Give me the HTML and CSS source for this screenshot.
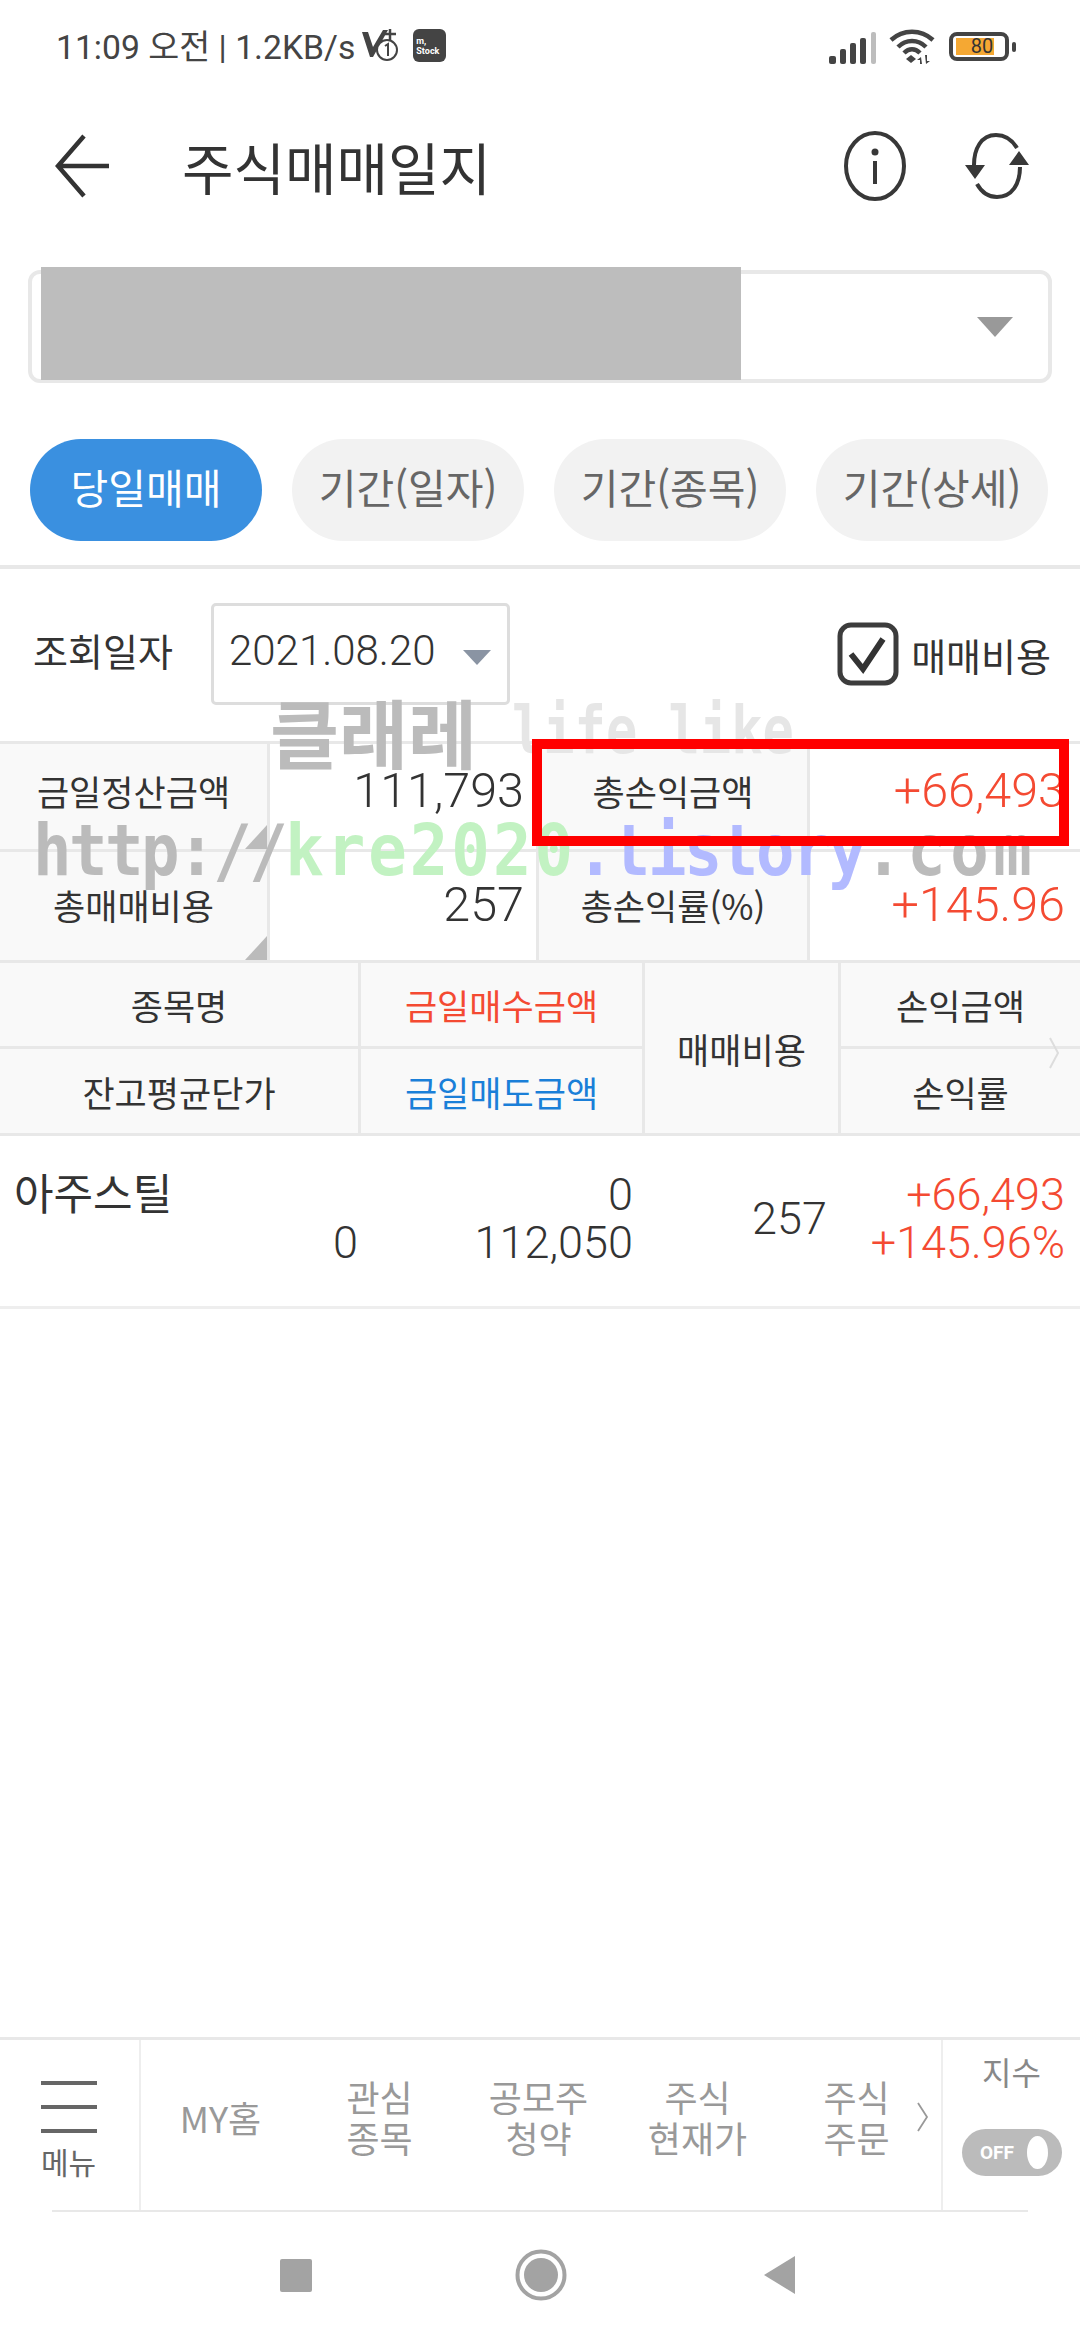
FILE: index.html
```html
<!doctype html>
<html lang="ko">
  <head>
    <meta charset="UTF-8" />
    <title>주식매매일지</title>
    <link rel="stylesheet" href="styles.css">
  </head>
  <body>
    <div class="page">
      <div class="status-bar">
        <span class="status-text">11:09 오전 | 1.2KB/s</span>
        <svg class="volte" width="38" height="34" viewBox="0 0 38 34">
          <path d="M1 4h6l5 15L22 2h5L12 29h-3z" fill="#444" />
          <path d="M29 1v11M24 6h11" stroke="#444" stroke-width="2.5" fill="none" />
          <circle cx="26" cy="22" r="10" fill="#fff" stroke="#444" stroke-width="2" />
          <path d="M24 18l3-2v12" stroke="#444" stroke-width="2" fill="none" />
        </svg>
        <div class="app-badge"><span>m,</span><span>Stock</span></div>
        <div class="status-right">
          <svg width="48" height="32" viewBox="0 0 48 32">
            <rect x="0" y="24" width="7" height="8" rx="2" fill="#444" />
            <rect x="11" y="17" width="6" height="15" rx="2" fill="#444" />
            <rect x="21" y="11" width="6" height="21" rx="2" fill="#444" />
            <rect x="31" y="6" width="6" height="26" rx="2" fill="#444" />
            <rect x="42" y="0" width="5" height="32" rx="2" fill="#bdbdbd" />
          </svg>
          <svg class="wifi" width="48" height="36" viewBox="0 0 48 36">
            <g fill="none" stroke="#444" stroke-width="4.5">
              <path d="M2 11C14 0 32 0 44 11" />
              <path d="M9 18C17 10 29 10 37 18" />
              <path d="M15 24C20 19 26 19 31 24" />
            </g>
            <path d="M17 30l5-4 5 4-5 4z" fill="#444" />
            <path d="M32 28l-4 3h3v4h2zM37 35l4-3h-3v-6h-2z" fill="#444" />
          </svg>
          <div class="battery">
            <div class="battery-body"><span class="battery-fill">80</span></div>
            <div class="battery-nub"></div>
          </div>
        </div>
      </div>

      <div class="title-bar">
        <svg class="back" width="56" height="66" viewBox="0 0 56 66">
          <path d="M29 3L3 33l26 30M3 33h51" fill="none" stroke="#333" stroke-width="4.5" />
        </svg>
        <h1>주식매매일지</h1>
        <svg class="info" width="62" height="72" viewBox="0 0 62 72">
          <ellipse cx="31" cy="36" rx="29" ry="33" fill="none" stroke="#383838" stroke-width="4" />
          <circle cx="31" cy="22" r="3.5" fill="#383838" />
          <path d="M31 31v23" stroke="#383838" stroke-width="4" />
        </svg>
        <svg class="refresh" width="64" height="68" viewBox="0 0 64 68">
          <path d="M52 16C46 6 38 3 31 3 16 3 9 17 9 33" fill="none" stroke="#383838" stroke-width="4" />
          <path d="M12 52c5 9 12 13 20 13 15 0 23-13 23-30" fill="none" stroke="#383838" stroke-width="4" />
          <path d="M0 33h20L10 47zM44 33h20L54 19z" fill="#383838" />
        </svg>
      </div>

      <div class="account-select">
        <div class="redacted"></div>
        <div class="arrow-big"></div>
      </div>

      <div class="tabs">
        <div class="tab tab-active">당일매매</div>
        <div class="tab">기간(일자)</div>
        <div class="tab">기간(종목)</div>
        <div class="tab">기간(상세)</div>
      </div>

      <div class="filter-row">
        <span class="filter-label">조회일자</span>
        <div class="date-select">
          <span>2021.08.20</span>
          <div class="arrow-small"></div>
        </div>
        <div class="cost-check">
          <svg width="62" height="64" viewBox="0 0 62 64">
            <rect x="3" y="3" width="56" height="58" rx="11" fill="#fff" stroke="#3c3c3c" stroke-width="5" />
            <path d="M14 32l12 15 20-30" fill="none" stroke="#333" stroke-width="6" />
          </svg>
          <span>매매비용</span>
        </div>
      </div>

      <div class="summary">
        <div class="cell label corner">금일정산금액</div>
        <div class="cell value">111,793</div>
        <div class="cell label">총손익금액</div>
        <div class="cell value value-last up">+66,493</div>
        <div class="cell label corner">총매매비용</div>
        <div class="cell value">257</div>
        <div class="cell label">총손익률(%)</div>
        <div class="cell value value-last up">+145.96</div>
      </div>

      <div class="table-head">
        <div class="th">종목명</div>
        <div class="th buy">금일매수금액</div>
        <div class="th th-tall">매매비용</div>
        <div class="th">손익금액</div>
        <div class="th">잔고평균단가</div>
        <div class="th sell">금일매도금액</div>
        <div class="th">손익률</div>
        <svg class="more" width="12" height="34" viewBox="0 0 12 34">
          <path d="M2 2l8 15-8 15" fill="none" stroke="#ddd" stroke-width="2" />
        </svg>
      </div>

      <div class="stock-row">
        <div class="stock-name">아주스틸</div>
        <div class="num">0</div>
        <div class="num num-tall">257</div>
        <div class="num up">+66,493</div>
        <div class="num">0</div>
        <div class="num">112,050</div>
        <div class="num up">+145.96%</div>
      </div>

      <div class="bottom-menu">
        <div class="menu-btn">
          <div class="menu-lines"><i></i><i></i><i></i></div>
          <span>메뉴</span>
        </div>
        <div class="menu-items">
          <div class="menu-item">MY홈</div>
          <div class="menu-item">관심<br />종목</div>
          <div class="menu-item">공모주<br />청약</div>
          <div class="menu-item">주식<br />현재가</div>
          <div class="menu-item">주식<br />주문</div>
          <svg width="12" height="30" viewBox="0 0 12 30">
            <path d="M1 1l9 14-9 14" fill="none" stroke="#999" stroke-width="1.8" />
          </svg>
        </div>
        <div class="index-box">
          <span>지수</span>
          <div class="toggle"><b>OFF</b><i></i></div>
        </div>
      </div>

      <div class="nav-bar">
        <div class="nav-square"></div>
        <svg class="nav-home" width="52" height="52" viewBox="0 0 52 52">
          <circle cx="26" cy="26" r="23.5" fill="none" stroke="#a3a3a3" stroke-width="4" />
          <circle cx="26" cy="26" r="17" fill="#a3a3a3" />
        </svg>
        <svg width="32" height="38" viewBox="0 0 32 38">
          <path d="M31 0v38L0 19z" fill="#a3a3a3" />
        </svg>
      </div>

      <!-- blog watermark and highlight sit on top of the screen -->
      <div class="watermark-top"><span class="wm-dark">클래레</span><span class="wm-light">life like</span></div>
      <div class="watermark-url"><span class="wm-http">http://</span><span class="wm-green">kre2020</span><span class="wm-blue">.tistory</span><span class="wm-com">.com</span></div>
      <div class="red-box"></div>
    </div>
  </body>
</html>
```

FILE: styles.css
```css
* {
  box-sizing: border-box;
}
body {
  margin: 0;
  background: #fff;
  font-family: Roboto, "Noto Sans CJK KR", sans-serif;
  color: #333;
}
.page {
  position: relative;
  width: 1080px;
  height: 2340px;
  overflow: hidden;
  display: flex;
  flex-direction: column;
}

/* status bar */
.status-bar {
  height: 94px;
  padding: 28px 64px 0 56px;
  display: flex;
  align-items: flex-start;
}
.status-text {
  font-size: 33.7px;
  line-height: 40px;
  color: #444;
  white-space: nowrap;
}
.volte {
  margin: 0 0 0 6px;
}
.app-badge {
  width: 33px;
  height: 33px;
  margin: 1px 0 0 14px;
  background: #444;
  border-radius: 6px;
  color: #fff;
  font-size: 9px;
  line-height: 10px;
  font-weight: 700;
  display: flex;
  flex-direction: column;
  justify-content: center;
  padding-left: 3px;
}
.status-right {
  margin-left: auto;
  display: flex;
  align-items: flex-start;
  gap: 12px;
  padding-top: 4px;
}
.wifi {
  margin-top: -3px;
}
.battery {
  display: flex;
  align-items: center;
  gap: 3px;
}
.battery-body {
  width: 60px;
  height: 29px;
  border: 4px solid #444;
  border-radius: 8px;
  padding: 2px 3px;
}
.battery-fill {
  display: block;
  width: 38px;
  height: 17px;
  background: #f5a833;
  font-size: 20px;
  line-height: 17px;
  text-align: center;
  color: #333;
  padding-left: 14px;
  white-space: nowrap;
}
.battery-nub {
  width: 4px;
  height: 10px;
  background: #444;
  border-radius: 2px;
}

/* title */
.title-bar {
  height: 78px;
  margin-top: 33px;
  padding: 0 51px 0 55px;
  display: flex;
  align-items: center;
}
.back {
  flex: none;
}
.title-bar h1 {
  margin: 0 0 0 71px;
  font-family: "Noto Sans CJK KR", sans-serif;
  font-size: 56px;
  line-height: 78px;
  font-weight: 400;
  color: #333;
  flex: 1;
}
.info {
  margin-right: 59px;
}

/* account select */
.account-select {
  position: relative;
  height: 113px;
  margin: 65px 28px 0 28px;
  border: 4px solid #e8e8e8;
  border-radius: 12px;
}
.redacted {
  position: absolute;
  left: 9px;
  top: -7px;
  width: 700px;
  height: 113px;
  background: #bdbdbd;
}
.arrow-big {
  position: absolute;
  right: 35px;
  top: 43px;
  border-left: 18px solid transparent;
  border-right: 18px solid transparent;
  border-top: 20px solid #999;
}

/* tabs */
.tabs {
  margin: 56px 32px 0 30px;
  display: flex;
  justify-content: space-between;
}
.tab {
  width: 232px;
  height: 102px;
  border-radius: 51px;
  background: #f2f2f2;
  color: #666;
  font-family: "Noto Sans CJK KR", sans-serif;
  font-size: 41px;
  line-height: 94px;
  text-align: center;
}
.tab-active {
  background: #3a90e0;
  color: #fff;
}

/* date filter */
.filter-row {
  height: 176px;
  margin-top: 24px;
  border-top: 4px solid #e8e8e8;
  padding: 34px 29px 0 33px;
  display: flex;
  align-items: flex-start;
}
.filter-label {
  font-family: "Noto Sans CJK KR", sans-serif;
  font-size: 38px;
  line-height: 94px;
  width: 178px;
}
.date-select {
  width: 299px;
  height: 102px;
  border: 3px solid #ddd;
  border-radius: 5px;
  padding-left: 15px;
  font-size: 42px;
  font-weight: 300;
  line-height: 90px;
  color: #333;
  display: flex;
}
.arrow-small {
  margin: 44px 0 0 28px;
  width: 0;
  height: 0;
  border-left: 14px solid transparent;
  border-right: 14px solid transparent;
  border-top: 15px solid #8a94a3;
}
.cost-check {
  margin-left: auto;
  display: flex;
  align-items: center;
  gap: 12px;
  padding-top: 19px;
  font-family: "Noto Sans CJK KR", sans-serif;
  font-size: 38px;
}

/* summary grid */
.summary {
  display: grid;
  grid-template-columns: 267px 266px 268px 1fr;
  grid-template-rows: 105px 108px;
  gap: 3px;
  background: #e8e8e8;
  padding: 3px 0 0;
}
.cell {
  position: relative;
  background: #fff;
  font-size: 48.5px;
  line-height: 94px;
  padding-right: 12px;
  text-align: right;
  font-weight: 300;
}
.cell:nth-child(n + 5) {
  line-height: 106px;
}
.cell.value-last {
  padding-right: 15px;
}
.cell.label {
  background: #f9f9f9;
  font-family: "Noto Sans CJK KR", sans-serif;
  font-size: 35px;
  padding: 0;
  text-align: center;
  font-weight: 400;
}
.corner::after {
  content: "";
  position: absolute;
  right: 0;
  bottom: 0;
  border-left: 22px solid transparent;
  border-bottom: 24px solid #bbb;
}
.up {
  color: #f44a32;
}

/* list header */
.table-head {
  position: relative;
  display: grid;
  grid-template-columns: 358px 281px 193px 1fr;
  grid-template-rows: 83px 84px;
  gap: 3px;
  background: #e8e8e8;
  padding: 3px 0;
}
.th {
  background: #f9f9f9;
  font-family: "Noto Sans CJK KR", sans-serif;
  font-size: 35px;
  display: flex;
  align-items: center;
  justify-content: center;
}
.th-tall {
  grid-row: span 2;
}
.buy {
  color: #f44a32;
}
.sell {
  color: #1a7fd8;
}
.more {
  position: absolute;
  right: 20px;
  top: 76px;
}

/* stock row */
.stock-row {
  display: grid;
  grid-template-columns: 358px 275px 194px 238px;
  grid-template-rows: 48px 48px;
  padding: 35px 15px 0 0;
  height: 173px;
  border-bottom: 3px solid #eee;
  font-size: 45px;
  font-weight: 300;
  line-height: 48px;
  align-items: center;
}
.stock-name {
  padding-left: 14px;
  margin-top: -8px;
  font-family: "Noto Sans CJK KR", sans-serif;
  font-size: 43px;
  font-weight: 400;
}
.num {
  text-align: right;
}
.num-tall {
  grid-row: span 2;
}

/* bottom menu */
.bottom-menu {
  margin-top: auto;
  height: 175px;
  border-top: 3px solid #e8e8e8;
  display: flex;
  position: relative;
}
.bottom-menu::after {
  content: "";
  position: absolute;
  left: 52px;
  right: 52px;
  bottom: 0;
  height: 2px;
  background: #e8e8e8;
}
.menu-btn {
  width: 141px;
  border-right: 2px solid #eee;
  padding: 41px 0 0 41px;
  color: #666;
  font-family: "Noto Sans CJK KR", sans-serif;
  font-size: 30px;
  line-height: 38px;
}
.menu-lines i {
  display: block;
  width: 56px;
  height: 4px;
  background: #666;
  margin-bottom: 20px;
}
.menu-lines {
  margin-bottom: -11px;
}
.menu-items {
  width: 802px;
  border-right: 2px solid #eee;
  display: flex;
  align-items: center;
  color: #999;
  font-family: "Noto Sans CJK KR", sans-serif;
  font-size: 36px;
  line-height: 41px;
  text-align: center;
}
.menu-items svg {
  margin: -18px 0 0 -19px;
}
.menu-item {
  flex: none;
  width: 159px;
  margin-top: -18px;
}
.index-box {
  flex: 1;
  padding-top: 9px;
  text-align: center;
  color: #888;
  font-family: "Noto Sans CJK KR", sans-serif;
  font-size: 32px;
  line-height: 44px;
}
.toggle {
  width: 100px;
  height: 47px;
  margin: 36px 0 0 19px;
  background: #bbb;
  border-radius: 24px;
  padding-left: 18px;
  display: flex;
  align-items: center;
  gap: 13px;
}
.toggle b {
  font-family: Roboto, sans-serif;
  font-size: 19px;
  color: #fff;
}
.toggle i {
  width: 21px;
  height: 33px;
  border-radius: 50%;
  background: #fff;
}

/* android nav */
.nav-bar {
  height: 128px;
  padding: 0 284px 2px 280px;
  display: flex;
  align-items: center;
  justify-content: space-between;
}
.nav-square {
  width: 32px;
  height: 33px;
  background: #a3a3a3;
  border-radius: 2px;
}
.nav-home {
  margin-left: 6px;
}

/* overlays */
.watermark-top {
  position: absolute;
  left: 270px;
  top: 680px;
  height: 100px;
  display: flex;
  align-items: center;
  font-weight: 700;
  white-space: nowrap;
}
.wm-dark {
  font-family: "Noto Sans CJK KR", sans-serif;
  font-size: 75px;
  color: #bbb;
  width: 242px;
}
.wm-light {
  font-family: "DejaVu Sans Mono", monospace;
  font-size: 52px;
  color: #e6e6e6;
  transform: scaleY(1.25);
}
.watermark-url {
  position: absolute;
  left: 33px;
  top: 801px;
  font-family: "DejaVu Sans Mono", monospace;
  font-size: 64px;
  line-height: 100px;
  font-weight: 700;
  white-space: nowrap;
  transform: scaleY(1.1);
}
.wm-http {
  color: #bbb;
  letter-spacing: -2.5px;
}
.wm-green {
  color: #c2f2c2;
  letter-spacing: 3px;
}
.wm-blue {
  color: #b2baff;
  letter-spacing: -2.5px;
}
.wm-com {
  color: #bbb;
  letter-spacing: 4.5px;
}
.red-box {
  position: absolute;
  left: 532px;
  top: 739px;
  width: 537px;
  height: 107px;
  border: 10px solid #f00;
}
```
